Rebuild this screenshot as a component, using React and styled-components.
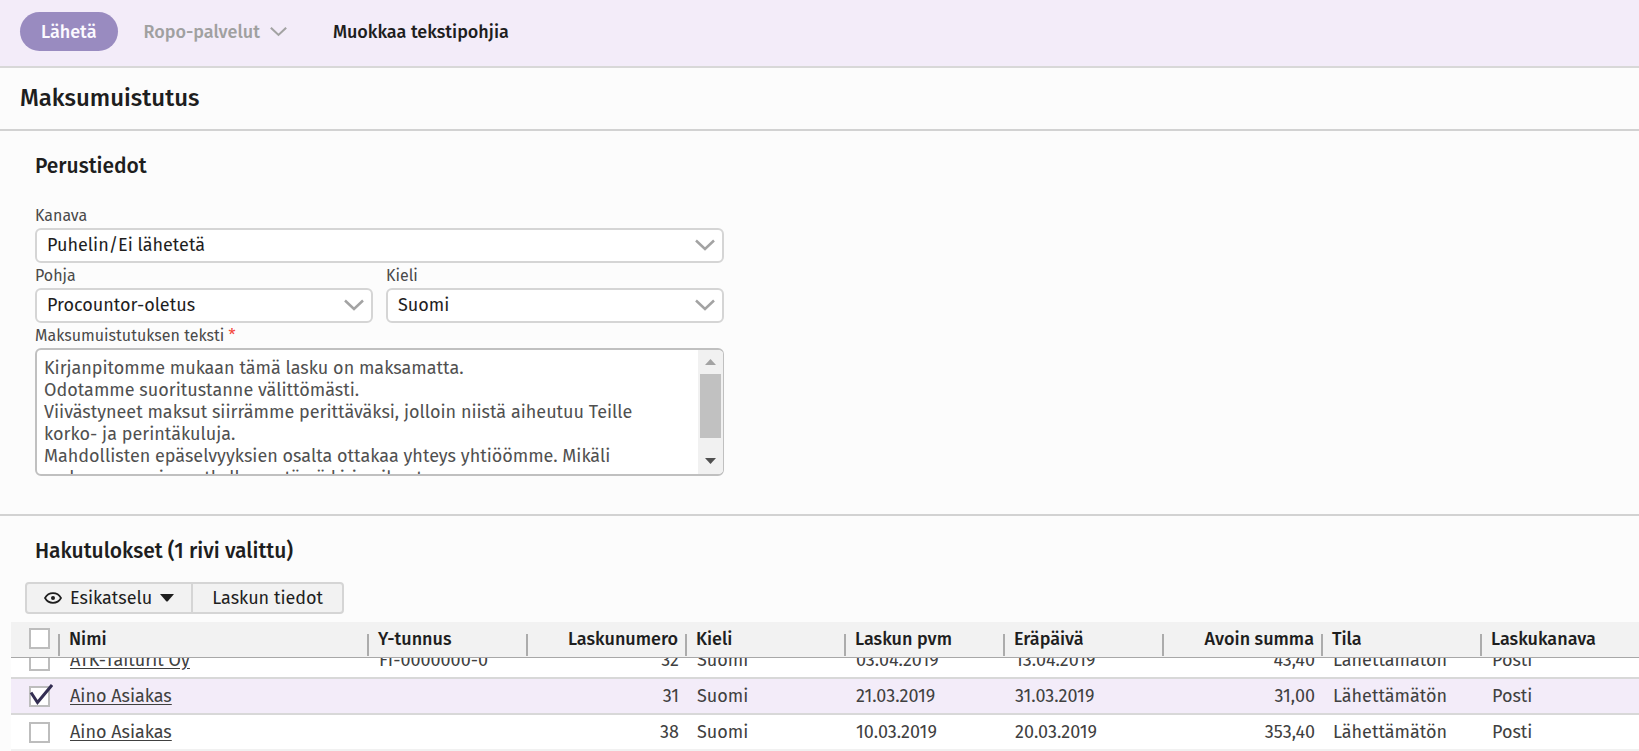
import React, { useLayoutEffect, useRef, useState } from "react";
import styled, { createGlobalStyle } from "styled-components";

const GlobalStyle = createGlobalStyle`
  *, *::before, *::after { box-sizing: border-box; }
  body {
    margin: 0;
    background: #fcfcfc;
    color: #1e1e1e;
    font-family: "Fira Sans", "Open Sans", "Noto Sans", sans-serif;
    font-size: 18px;
  }
  button, select, textarea, input { font: inherit; color: inherit; }
`;

const Page = styled.div`
  display: flex;
  flex-direction: column;
  height: 100vh;
  overflow: hidden;
`;

const Toolbar = styled.header`
  display: flex;
  align-items: center;
  flex: none;
  height: 68px;
  padding: 0 20px 3px 20px;
  background: #f3ecf9;
  border-bottom: 2px solid #d8d8d8;
`;

const PrimaryButton = styled.button`
  height: 39px;
  padding: 0 21px;
  border: 0;
  border-radius: 20px;
  background: #998bc0;
  color: #fcfaff;
  font-weight: 500;
`;

const ToolbarButton = styled.button`
  display: inline-flex;
  align-items: center;
  gap: 10px;
  height: 39px;
  margin-left: ${(p) => (p.$wide ? 46 : 26)}px;
  padding: 0;
  border: 0;
  background: none;
  font-weight: 500;
  color: ${(p) => (p.disabled ? "#a0a0a0" : "#1e1e1e")};
`;

const TitleBar = styled.div`
  flex: none;
  padding: 12px 20px 13px;
  border-bottom: 2px solid #d2d2d2;
`;

const Title = styled.h1`
  margin: 0;
  font-size: 24px;
  line-height: 36px;
  font-weight: 500;
`;

const FormSection = styled.section`
  flex: none;
  padding: 20px 35px 38px;
  border-bottom: 2px solid #d2d2d2;
`;

const SectionTitle = styled.h2`
  margin: 0;
  font-size: 21px;
  line-height: 30px;
  font-weight: 500;
`;

const Form = styled.form`
  display: grid;
  grid-template-columns: 1fr 1fr;
  column-gap: 13px;
  max-width: 689px;
  margin-top: 22px;
`;

const Field = styled.div`
  display: flex;
  flex-direction: column;
  grid-column: ${(p) => (p.$full ? "1 / -1" : "auto")};
`;

const Label = styled.label`
  font-size: 16px;
  line-height: 25px;
  color: #4a4a4a;
`;

const Required = styled.span`
  color: #f44336;
`;

const SelectBox = styled.div`
  display: grid;
  align-items: center;

  > * { grid-area: 1 / 1; }
  > svg {
    justify-self: end;
    margin: 0 9px 2px 0;
    pointer-events: none;
  }
`;

const Select = styled.select`
  appearance: none;
  width: 100%;
  height: 35px;
  padding: 0 36px 2px 10px;
  border: 2px solid #d5d5d5;
  border-radius: 6px;
  background: #fff;
`;

const TextBox = styled.div`
  display: flex;
  height: 128px;
  border: 2px solid #c0c0c0;
  border-right-width: 1px;
  border-radius: 6px;
  background: #fff;
  overflow: hidden;
`;

const TextArea = styled.textarea`
  flex: 1;
  min-width: 0;
  padding: 7px 16px 7px 7px;
  border: 0;
  outline: 0;
  resize: none;
  background: none;
  color: #505050;
  line-height: 22px;
  scrollbar-width: none;
`;

const ScrollTrack = styled.div`
  display: flex;
  flex-direction: column;
  justify-content: space-between;
  width: 25px;
  padding: 0 2px;
  background: #f1f1f1;
`;

const ScrollThumb = styled.div`
  height: 64px;
  margin-bottom: 12px;
  background: #c1c1c1;
`;

const ScrollArrow = styled.svg`
  display: block;
  width: 21px;
  height: 24px;
`;

const Results = styled.section`
  display: flex;
  flex-direction: column;
  flex: 1;
  min-height: 0;
  padding: 20px 0 0 11px;

  > h2 { padding-left: 24px; }
`;

const ButtonGroup = styled.div`
  display: flex;
  margin: 16px 0 8px 14px;
`;

const GroupButton = styled.button`
  display: inline-flex;
  align-items: center;
  gap: 8px;
  height: 32px;
  padding: 0 ${(p) => (p.$menu ? 17 : 19)}px 1px;
  border: 2px solid #d5d5d5;
  background: #f2f2f2;

  &:first-child { border-radius: 4px 0 0 4px; }
  &:last-child { border-radius: 0 4px 4px 0; }
  & + & { margin-left: -2px; }
`;

const TableScroll = styled.div`
  flex: 1;
  min-height: 0;
  overflow: auto;
  scrollbar-width: none;
`;

const Table = styled.table`
  width: 100%;
  table-layout: fixed;
  border-collapse: separate;
  border-spacing: 0;
`;

const Col = styled.col`
  width: ${(p) => (p.$w ? `${p.$w}px` : "auto")};
`;

const Th = styled.th`
  position: sticky;
  top: 0;
  z-index: 1;
  height: 36px;
  padding: ${(p) => (p.$check ? "0 0 2px 18px" : "0 9px 2px")};
  background:
    linear-gradient(#acacac, #acacac) right 12px / 2px 22px no-repeat,
    #f2f2f2;
  border-bottom: 1px solid #a8a8a8;
  text-align: ${(p) => (p.$right ? "right" : "left")};
  font-weight: 500;
  white-space: nowrap;

  &:last-child { background: #f2f2f2; }
`;

const Row = styled.tr`
  background: ${(p) => (p.$selected ? "#f3ecf9" : "#fff")};
`;

const Td = styled.td`
  height: 36px;
  padding: ${(p) => (p.$check ? "0 0 0 18px" : "0 8px 0 10px")};
  border-bottom: 2px solid #d8d8d8;
  text-align: ${(p) => (p.$right ? "right" : "left")};
  color: #404040;
  white-space: nowrap;

  ${Row}:last-child & { border-bottom-color: #f1f1f1; }
`;

const NameLink = styled.a`
  color: inherit;
  text-decoration: underline;
  text-underline-offset: 2px;
`;

const CheckWrap = styled.label`
  position: relative;
  display: block;
  width: 21px;
  height: 21px;

  > svg {
    position: absolute;
    left: 0;
    top: -2px;
    pointer-events: none;
  }
`;

const CheckInput = styled.input`
  appearance: none;
  display: block;
  width: 21px;
  height: 21px;
  margin: 0;
  border: 2px solid #bdbdbd;
  background: #fff;
`;

function Chevron({ width = 20, height = 12, stroke = 2.5 }) {
  return (
    <svg width={width} height={height} viewBox="0 0 20 12" fill="none" stroke="#a3a3a3" strokeWidth={stroke} aria-hidden="true">
      <path d="M1 1.5 10 10 19 1.5" />
    </svg>
  );
}

function EyeIcon() {
  return (
    <svg width="18" height="12" viewBox="0 0 18 12" fill="none" aria-hidden="true">
      <path d="M1 6C4.6-.4 13.4-.4 17 6 13.4 12.400 4.600 12.400 1 6Z" stroke="#1e1e1e" strokeWidth="1.700" />
      <circle cx="9" cy="6" r="2" fill="#1e1e1e" />
    </svg>
  );
}

function CheckBox({ label, checked, onChange }) {
  return (
    <CheckWrap>
      <CheckInput type="checkbox" aria-label={label} checked={checked} onChange={onChange} />
      {checked && (
        <svg width="24" height="22" viewBox="0 0 24 22" fill="none" aria-hidden="true">
          <path d="M2 8.500 8.500 18.500 23 1" stroke="#332e52" strokeWidth="3" />
        </svg>
      )}
    </CheckWrap>
  );
}

function SelectField({ id, label, value, full }) {
  return (
    <Field $full={full}>
      <Label htmlFor={id}>{label}</Label>
      <SelectBox>
        <Select id={id} defaultValue={value}>
          <option>{value}</option>
        </Select>
        <Chevron />
      </SelectBox>
    </Field>
  );
}

const REMINDER_TEXT = `Kirjanpitomme mukaan tämä lasku on maksamatta.
Odotamme suoritustanne välittömästi.
Viivästyneet maksut siirrämme perittäväksi, jolloin niistä aiheutuu Teille korko- ja perintäkuluja.
Mahdollisten epäselvyyksien osalta ottakaa yhteys yhtiöömme. Mikäli maksunne on jo matkalla, on tämä kirje aiheeton.`;

const COLUMNS = [
  { key: "name", title: "Nimi", width: 309 },
  { key: "businessId", title: "Y-tunnus", width: 159 },
  { key: "number", title: "Laskunumero", width: 159, right: true },
  { key: "language", title: "Kieli", width: 159 },
  { key: "date", title: "Laskun pvm", width: 159 },
  { key: "due", title: "Eräpäivä", width: 159 },
  { key: "sum", title: "Avoin summa", width: 159, right: true },
  { key: "status", title: "Tila", width: 159 },
  { key: "channel", title: "Laskukanava" },
];

const INVOICES = [
  { name: "ATK-Taiturit Oy", businessId: "FI-0000000-0", number: "32", language: "Suomi", date: "03.04.2019", due: "13.04.2019", sum: "43,40", status: "Lähettämätön", channel: "Posti" },
  { name: "Aino Asiakas", businessId: "", number: "31", language: "Suomi", date: "21.03.2019", due: "31.03.2019", sum: "31,00", status: "Lähettämätön", channel: "Posti" },
  { name: "Aino Asiakas", businessId: "", number: "38", language: "Suomi", date: "10.03.2019", due: "20.03.2019", sum: "353,40", status: "Lähettämätön", channel: "Posti" },
];

function InvoiceTable({ selected, onToggle, onToggleAll }) {
  const scroller = useRef(null);

  useLayoutEffect(() => {
    scroller.current.scrollTop = 15;
  }, []);

  return (
    <TableScroll ref={scroller}>
      <Table>
        <colgroup>
          <Col $w={49} />
          {COLUMNS.map((c) => (
            <Col key={c.key} $w={c.width} />
          ))}
        </colgroup>
        <thead>
          <tr>
            <Th $check>
              <CheckBox label="Valitse kaikki" checked={selected.length === INVOICES.length} onChange={onToggleAll} />
            </Th>
            {COLUMNS.map((c) => (
              <Th key={c.key} $right={c.right}>{c.title}</Th>
            ))}
          </tr>
        </thead>
        <tbody>
          {INVOICES.map((inv) => {
            const isSelected = selected.includes(inv.number);
            return (
              <Row key={inv.number} $selected={isSelected}>
                <Td $check>
                  <CheckBox label={`Valitse lasku ${inv.number}`} checked={isSelected} onChange={() => onToggle(inv.number)} />
                </Td>
                {COLUMNS.map((c) => (
                  <Td key={c.key} $right={c.right}>
                    {c.key === "name" ? <NameLink href="#">{inv.name}</NameLink> : inv[c.key]}
                  </Td>
                ))}
              </Row>
            );
          })}
        </tbody>
      </Table>
    </TableScroll>
  );
}

export default function App() {
  const [selected, setSelected] = useState(["31"]);
  const toggle = (n) => setSelected((s) => (s.includes(n) ? s.filter((x) => x !== n) : [...s, n]));
  const toggleAll = () =>
    setSelected((s) => (s.length === INVOICES.length ? [] : INVOICES.map((i) => i.number)));

  return (
    <Page>
      <GlobalStyle />
      <Toolbar>
        <PrimaryButton type="button">Lähetä</PrimaryButton>
        <ToolbarButton type="button" disabled>
          Ropo-palvelut
          <Chevron width={17} height={11} />
        </ToolbarButton>
        <ToolbarButton type="button" $wide>Muokkaa tekstipohjia</ToolbarButton>
      </Toolbar>

      <TitleBar>
        <Title>Maksumuistutus</Title>
      </TitleBar>

      <FormSection>
        <SectionTitle>Perustiedot</SectionTitle>
        <Form>
          <SelectField id="channel" label="Kanava" value="Puhelin/Ei lähetetä" full />
          <SelectField id="template" label="Pohja" value="Procountor-oletus" />
          <SelectField id="language" label="Kieli" value="Suomi" />
          <Field $full>
            <Label htmlFor="text">
              Maksumuistutuksen teksti <Required>*</Required>
            </Label>
            <TextBox>
              <TextArea id="text" defaultValue={REMINDER_TEXT} required spellCheck={false} />
              <ScrollTrack aria-hidden="true">
                <ScrollArrow viewBox="0 0 21 24">
                  <path d="M5 15 10.500 9 16 15Z" fill="#a3a3a3" />
                </ScrollArrow>
                <ScrollThumb />
                <ScrollArrow viewBox="0 0 21 24">
                  <path d="M5 8 10.500 14 16 8Z" fill="#505050" />
                </ScrollArrow>
              </ScrollTrack>
            </TextBox>
          </Field>
        </Form>
      </FormSection>

      <Results>
        <SectionTitle>Hakutulokset ({selected.length} rivi valittu)</SectionTitle>
        <ButtonGroup>
          <GroupButton type="button" $menu>
            <EyeIcon />
            Esikatselu
            <svg width="14" height="8" viewBox="0 0 14 8" aria-hidden="true">
              <path d="M0 0H14L8 7Q7 8 6 7Z" fill="#1e1e1e" />
            </svg>
          </GroupButton>
          <GroupButton type="button">Laskun tiedot</GroupButton>
        </ButtonGroup>
        <InvoiceTable selected={selected} onToggle={toggle} onToggleAll={toggleAll} />
      </Results>
    </Page>
  );
}
